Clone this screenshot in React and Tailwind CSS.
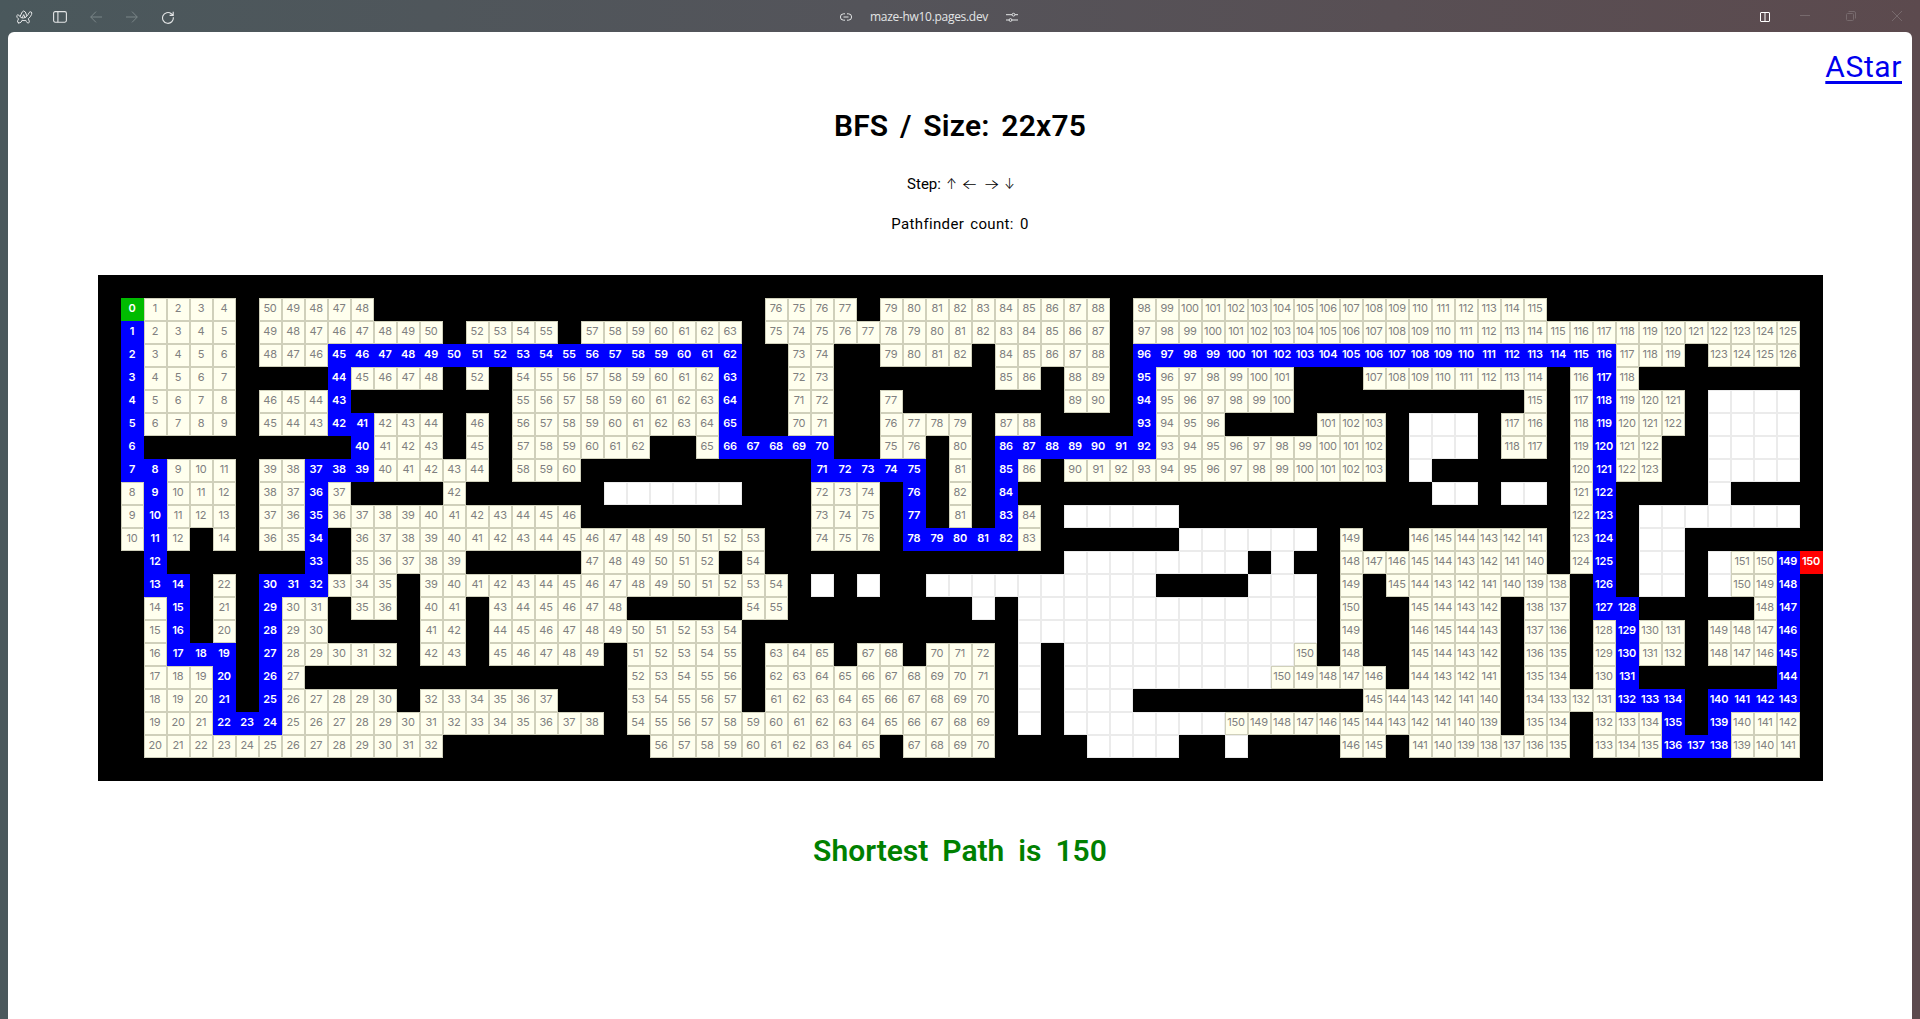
import React from 'react';

const COLS = 75;
const ROWS = 22;

// Each row lists runs of cells: S start, E exit, B shortest path, v visited, o open but never reached.
const RUNS = [
  '',
  'S1 v2-5 v7-11 v29-32 v34-43 v45-62',
  'B1 v2-5 v7-14 v16-19 v21-27 v29-43 v45-73',
  'B1 v2-5 v7-9 B10-27 v30-31 v34-37 v39-43 B45-65 v66-68 v70-73',
  'B1 v2-5 B10 v11-14 v16 v18-26 B27 v30-31 v39-40 v42-43 B45 v46-51 v55-62 v64 B65 v66',
  'B1 v2-5 v7-9 B10 v18-26 B27 v30-31 v34 v42-43 B45 v46-51 v62 v64 B65 v66-68 o70-73',
  'B1 v2-5 v7-9 B10-11 v12-14 v16 v18-26 B27 v30-31 v34-37 v39-40 B45 v46-48 v53-55 o57-59 v61-62 v64 B65 v66-68 o70-73',
  'B1 B11 v12-14 v16 v18-23 v26 B27-31 v34-35 v37 B39-45 v46-55 o57-59 v61-62 v64 B65 v66-67 o70-73',
  'B1-2 v3-5 v7-8 B9-11 v12-16 v18-20 B31-35 v37 B39 v40 v42-55 o57 v64 B65 v66-67 o70-73',
  'v1 B2 v3-5 v7-8 B9 v10 v15 o22-27 v31-33 B35 v37 B39 o58-59 o61-62 v64 B65 o70',
  'v1 B2 v3-5 v7-8 B9 v10-20 v31-33 B35 v37 B39 v40 o42-46 v64 B65 o67-73',
  'v1 B2 v3 v5 v7-8 B9 v11-28 v31-33 B35-39 v40 o47-52 v54 v57-62 v64 B65 o67-68',
  'B2 B9 v11-15 v21-26 v28 o42-49 o51 v54-62 v64 B65 o67-68 o70 v71-72 B73 E74',
  'B2-3 v5 B7-9 v10-12 v14-29 o31 o33 o36-45 o50-52 v54 v56-63 B65 o67-68 o70 v71-72 B73',
  'v2 B3 v5 B7 v8-9 v11-12 v14-15 v17-22 v28-29 o38 o40-52 v54 v57-60 v62-63 B65-66 v72 B73',
  'v2 B3 v5 B7 v8-9 v14-15 v17-27 o40-52 v54 v57-60 v62-63 v65 B66 v67-68 v70-72 B73',
  'v2 B3-5 B7 v8-12 v14-15 v17-21 v23-27 v29-31 v33-34 v36-38 o40 o42-51 v52 v54 v57-60 v62-63 v65 B66 v67-68 v70-72 B73',
  'v2-4 B5 B7 v8 v23-27 v29-38 o40 o42-50 v51-55 v57-60 v62-63 v65 B66 B73',
  'v2-4 B5 B7 v8-12 v14-19 v23-27 v29-38 o40 o42-44 v55-60 v62-65 B66-68 B70-73',
  'v2-4 B5-7 v8-21 v23-38 o40 o42-48 v49-60 v62-63 v65-67 B68 B70 v71-73',
  'v2-14 v24-33 v35-38 o43-46 o49 v54-55 v57-63 v65-67 B68-70 v71-73',
  '',
];

const grid = RUNS.map((line) => {
  const row = Array(COLS).fill('#');
  line.split(' ').filter(Boolean).forEach((run) => {
    const [from, to = from] = run.slice(1).split('-').map(Number);
    row.fill(run[0], from, to + 1);
  });
  return row;
});

function distances() {
  const dist = grid.map((r) => r.map(() => null));
  dist[1][1] = 0;
  const queue = [[1, 1]];
  while (queue.length) {
    const [r, c] = queue.shift();
    for (const [dr, dc] of [[-1, 0], [0, -1], [0, 1], [1, 0]]) {
      const y = r + dr;
      const x = c + dc;
      if (y < 0 || x < 0 || y >= ROWS || x >= COLS) continue;
      if (grid[y][x] === '#' || grid[y][x] === 'o' || dist[y][x] !== null) continue;
      dist[y][x] = dist[r][c] + 1;
      queue.push([y, x]);
    }
  }
  return dist;
}

const dist = distances();

const STYLES = {
  '#': 'bg-black',
  S: 'bg-[#00bb00] text-white font-semibold border border-[#00bb00]',
  E: 'bg-[#ff0000] text-white font-semibold border border-[#ff0000]',
  B: 'bg-[#0000ff] text-white font-semibold border border-[#0000ff]',
  v: 'bg-[#ffffee] text-[#808080] border border-[#d0d0bb]',
  o: 'bg-white border border-[#ebebeb]',
};

function Maze() {
  return (
    <div className="grid w-[1725px] grid-cols-[repeat(75,23px)] grid-rows-[repeat(22,23px)] bg-black font-['Inter',sans-serif] text-[11px] leading-[19px] tracking-[-0.2px]">
      {grid.flatMap((row, r) =>
        row.map((type, c) => (
          <div key={`${r}-${c}`} className={`flex justify-center ${STYLES[type]}`}>
            {dist[r][c]}
          </div>
        ))
      )}
    </div>
  );
}

function TopBar() {
  return (
    <header className="flex h-8 items-center justify-between text-[#e3e5e6]">
      <div className="flex w-[300px] items-center pl-4 pt-[2px]">
        <svg width="17" height="14" viewBox="0 0 17 14" fill="none" stroke="currentColor" strokeWidth="1" strokeLinejoin="round" strokeLinecap="round">
          <path d="M2.6 12.9Q1 12.6 1.6 10.9L2.5 8.9Q.4 7.4.8 5.6 1.6 4.2 2.9 5.2L4 6.6 6.2 2Q7.6-.1 9.3 2L10.9 5.9Q12.5 4.5 13 2.7 14 1.2 15.3 2 16.2 2.8 15.6 4.4 14.6 7 12.3 8.8L13.3 11.1Q13.7 12.8 12.2 13 11 13 10.4 11.6L9.9 10.4Q8.1 10.9 6 10.3L5.2 12Q4.2 13.2 2.6 12.9Z" />
          <path d="M4 6.6Q4.9 7.6 6.1 7.9L7.7 4.6 9 7.6Q10 7.4 10.9 5.9M6.1 7.9Q7.6 8.3 9 7.6" />
        </svg>
        <svg className="ml-5" width="14" height="12" viewBox="0 0 14 12" fill="none" stroke="currentColor" strokeWidth="1.1">
          <rect x=".6" y=".6" width="12.8" height="10.6" rx="1.6" />
          <path d="M4.9 .6V11.2" />
        </svg>
        <svg className="ml-[23px] text-[#7b8688]" width="12" height="12" viewBox="0 0 12 12" fill="none" stroke="currentColor" strokeWidth="1">
          <path d="M12 6H.8M6 .6.7 6 6 11.4" />
        </svg>
        <svg className="ml-6 text-[#7b8688]" width="12" height="12" viewBox="0 0 12 12" fill="none" stroke="currentColor" strokeWidth="1">
          <path d="M0 6H11.2M6 .6 11.3 6 6 11.4" />
        </svg>
        <svg className="ml-6" width="12" height="13" viewBox="0 0 12 13" fill="none" stroke="currentColor" strokeWidth="1.1">
          <path d="M11.3 6.2A5.4 5.4 0 1 1 9.3 2.7L11 4.2M11.2 .8V4.4H7.6" />
        </svg>
      </div>
      <div className="mr-[62px] flex items-center pt-[2px]">
        <svg width="12" height="8" viewBox="0 0 12 8" fill="none" stroke="currentColor" strokeWidth="1">
          <path d="M5 .8H3.6A3.2 3.2 0 0 0 3.6 7.2H5M7 .8H8.4A3.2 3.2 0 0 1 8.4 7.2H7M3.5 4H8.5" />
        </svg>
        <span className="ml-[18px] w-[118px] whitespace-nowrap font-['Open_Sans',sans-serif] text-[12px] leading-4 tracking-[-0.3px]">maze-hw10.pages.dev</span>
        <svg className="ml-[18px]" width="12" height="11" viewBox="0 0 12 11" fill="none" stroke="currentColor" strokeWidth="1">
          <path d="M0 2.7H6M9 2.7H12M0 8H3M6 8H12" />
          <circle cx="7.5" cy="2.7" r="1.4" />
          <circle cx="4.5" cy="8" r="1.4" />
        </svg>
      </div>
      <div className="flex w-[300px] items-center justify-end pr-[18px] text-[#776a6d]">
        <svg className="mt-[2px] text-white" width="10" height="10" viewBox="0 0 10 10" fill="none" stroke="currentColor">
          <rect x=".5" y=".5" width="9" height="9" rx=".5" />
          <path d="M5 .5V9.5" />
        </svg>
        <svg className="ml-[30px]" width="10" height="10" viewBox="0 0 10 10" stroke="currentColor"><path d="M0 4.5H10" /></svg>
        <svg className="ml-9" width="10" height="10" viewBox="0 0 10 10" fill="none" stroke="currentColor">
          <rect x=".5" y="2.5" width="7" height="7" rx="1" />
          <path d="M2.5 .5H8Q9.5 .5 9.5 2V7.5" />
        </svg>
        <svg className="ml-9" width="10" height="10" viewBox="0 0 10 10" stroke="currentColor"><path d="M0 0 10 10M10 0 0 10" /></svg>
      </div>
    </header>
  );
}

export default function App() {
  return (
    <div className="h-[1019px] w-[1920px] overflow-hidden bg-[linear-gradient(to_right,#4a585c,#54545a_45%,#5c4a4e)] px-2">
      <div className="-mx-2"><TopBar /></div>
      <main className="flex h-[987px] flex-col items-center rounded-t-md bg-white font-['Roboto',sans-serif] text-black">
        <nav className="flex h-[70px] w-full justify-end pr-[10px] pt-[14px]">
          <a href="#astar" className="text-[30px] leading-[42px] tracking-[0.6px] text-[#0000ee] underline decoration-[3px] underline-offset-[4px]">AStar</a>
        </nav>
        <h1 className="h-12 whitespace-nowrap text-[30px] font-semibold leading-[48px] tracking-[0.2px] [word-spacing:4px]">BFS / Size: 22x75</h1>
        <p className="mt-[22px] flex h-6 items-center gap-[7px] whitespace-nowrap text-[15px] leading-6">
          <span>Step:</span>
          <span className="flex gap-[7px] font-['Inter',sans-serif] text-[14px] font-light">
            <span className="flex w-[7px] scale-x-90 justify-center">↑</span>
            <span className="flex w-[15px] scale-x-[1.25] justify-center">←</span>
            <span className="flex w-[15px] scale-x-[1.25] justify-center">→</span>
            <span className="flex w-[7px] scale-x-90 justify-center">↓</span>
          </span>
        </p>
        <p className="mt-4 h-6 whitespace-nowrap text-[15px] leading-6 tracking-[0.35px] [word-spacing:2px]">Pathfinder count: 0</p>
        <div className="mt-[39px]"><Maze /></div>
        <h2 className="mt-[46px] whitespace-nowrap text-[30px] font-semibold leading-[48px] text-[#008000] [word-spacing:6.5px]">Shortest Path is 150</h2>
      </main>
    </div>
  );
}
